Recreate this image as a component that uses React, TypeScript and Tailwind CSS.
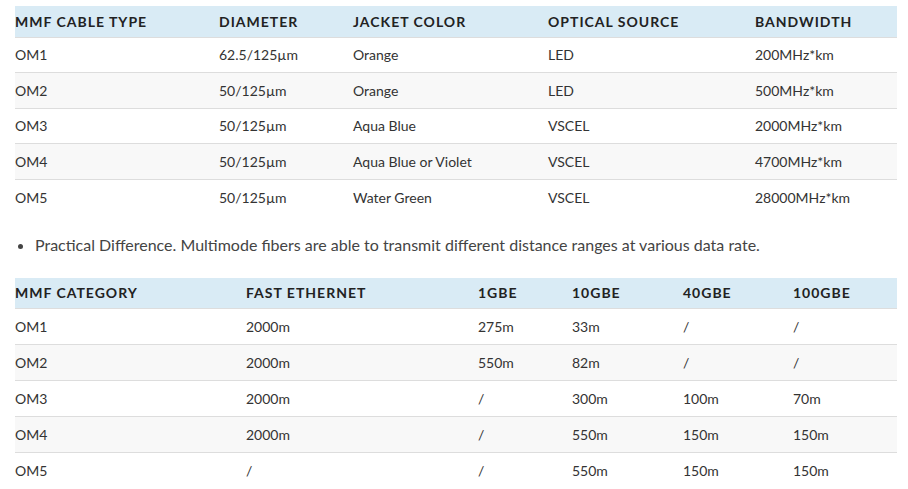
import React from "react";

const t1Head = ["MMF CABLE TYPE", "DIAMETER", "JACKET COLOR", "OPTICAL SOURCE", "BANDWIDTH"];
const t1W = ["w-[204px]", "w-[134px]", "w-[195px]", "w-[207px]", "w-[142px]"];
const t1Rows = [
  ["OM1", "62.5/125µm", "Orange", "LED", "200MHz*km"],
  ["OM2", "50/125µm", "Orange", "LED", "500MHz*km"],
  ["OM3", "50/125µm", "Aqua Blue", "VSCEL", "2000MHz*km"],
  ["OM4", "50/125µm", "Aqua Blue or Violet", "VSCEL", "4700MHz*km"],
  ["OM5", "50/125µm", "Water Green", "VSCEL", "28000MHz*km"],
];

const t2Head = ["MMF CATEGORY", "FAST ETHERNET", "1GBE", "10GBE", "40GBE", "100GBE"];
const t2W = ["w-[231px]", "w-[232px]", "w-[94px]", "w-[111px]", "w-[110px]", "w-[104px]"];
const t2Rows = [
  ["OM1", "2000m", "275m", "33m", "/", "/"],
  ["OM2", "2000m", "550m", "82m", "/", "/"],
  ["OM3", "2000m", "/", "300m", "100m", "70m"],
  ["OM4", "2000m", "/", "550m", "150m", "150m"],
  ["OM5", "/", "/", "550m", "150m", "150m"],
];

function Table({
  head,
  widths,
  rows,
  rowH,
}: {
  head: string[];
  widths: string[];
  rows: string[][];
  rowH: string;
}) {
  return (
    <table className="w-[882px] border-collapse table-fixed">
      <colgroup>
        {widths.map((w, i) => (
          <col key={i} className={w} />
        ))}
      </colgroup>
      <thead>
        <tr className="bg-[#d9ebf5] border-b border-[#dddddd] h-[31px]">
          {head.map((h, i) => (
            <th
              key={i}
              className="p-0 text-left align-middle font-bold text-[14px] tracking-[1px] text-[#222222]"
            >
              {h}
            </th>
          ))}
        </tr>
      </thead>
      <tbody>
        {rows.map((r, ri) => (
          <tr
            key={ri}
            className={
              (ri % 2 === 1 ? "bg-[#f8f8f8] " : "bg-white ") +
              (ri < rows.length - 1 ? "border-b border-[#dddddd] " : "") +
              rowH
            }
          >
            {r.map((c, ci) => (
              <td key={ci} className="p-0 text-left align-middle text-[14px] text-[#333333]">
                {c}
              </td>
            ))}
          </tr>
        ))}
      </tbody>
    </table>
  );
}

export default function App() {
  return (
    <div
      className="w-[908px] h-[489px] bg-white overflow-hidden pl-[15px] pt-[6px]"
      style={{ fontFamily: "Lato, 'Open Sans', sans-serif" }}
    >
      <Table head={t1Head} widths={t1W} rows={t1Rows} rowH="h-[35.5px]" />
      <ul className="mt-[18px] mb-[21px] pl-[20px] list-disc text-[16px] text-[#444444] leading-[24px]">
        <li>Practical Difference. Multimode fibers are able to transmit different distance ranges at various data rate.</li>
      </ul>
      <Table head={t2Head} widths={t2W} rows={t2Rows} rowH="h-[36px]" />
    </div>
  );
}
